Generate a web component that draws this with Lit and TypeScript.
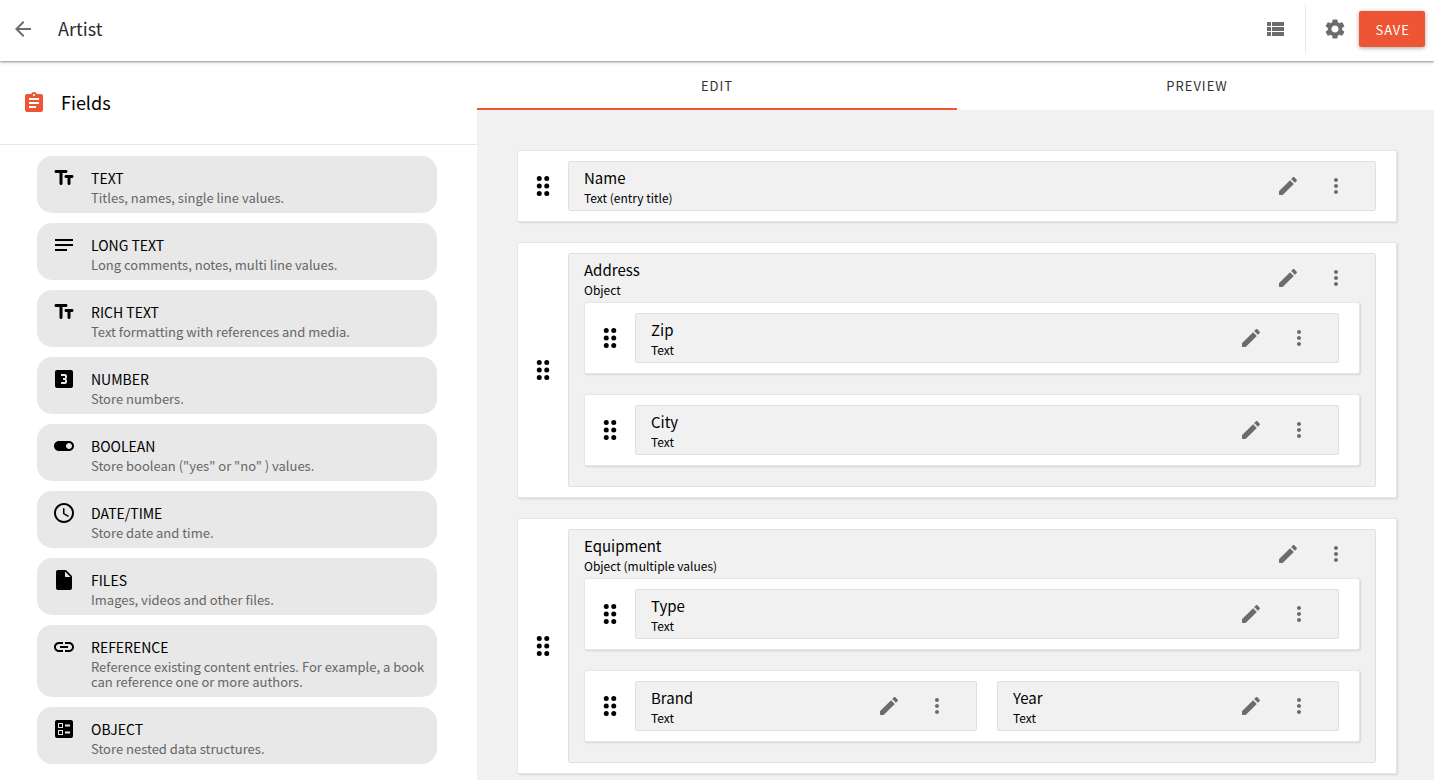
import { LitElement, html, css, svg } from "lit";
import { customElement, state } from "lit/decorators.js";
import { classMap } from "lit/directives/class-map.js";

interface FieldType {
  icon: string;
  label: string;
  description: string;
}

interface Field {
  label: string;
  type: string;
  rows?: Field[][];
}

const ICONS: Record<string, string> = {
  back: "M20 11H7.83l5.59-5.59L12 4l-8 8 8 8 1.41-1.41L7.83 13H20v-2z",
  list: "M4 14h4v-4H4v4zm0 5h4v-4H4v4zM4 9h4V5H4v4zm5 5h12v-4H9v4zm0 5h12v-4H9v4zM9 5v4h12V5H9z",
  settings:
    "M19.14 12.94c.04-.3.06-.61.06-.94 0-.32-.02-.64-.07-.94l2.03-1.58c.18-.14.23-.41.12-.61l-1.92-3.32c-.12-.22-.37-.29-.59-.22l-2.39.96c-.5-.38-1.03-.7-1.62-.94l-.36-2.54c-.04-.24-.24-.41-.48-.41h-3.84c-.24 0-.43.17-.47.41l-.36 2.54c-.59.24-1.13.57-1.62.94l-2.39-.96c-.22-.08-.47 0-.59.22L2.74 8.87c-.12.21-.08.47.12.61l2.03 1.58c-.05.3-.09.63-.09.94s.02.64.07.94l-2.03 1.58c-.18.14-.23.41-.12.61l1.92 3.32c.12.22.37.29.59.22l2.39-.96c.5.38 1.03.7 1.62.94l.36 2.54c.05.24.24.41.48.41h3.84c.24 0 .44-.17.47-.41l.36-2.54c.59-.24 1.13-.56 1.62-.94l2.39.96c.22.08.47 0 .59-.22l1.92-3.32c.12-.22.07-.47-.12-.61l-2.01-1.58zM12 15.6c-1.98 0-3.6-1.62-3.6-3.6s1.62-3.6 3.6-3.6 3.6 1.62 3.6 3.6-1.62 3.6-3.6 3.6z",
  assignment:
    "M19 3h-4.18C14.4 1.84 13.3 1 12 1c-1.3 0-2.4.84-2.82 2H5c-1.1 0-2 .9-2 2v14c0 1.1.9 2 2 2h14c1.1 0 2-.9 2-2V5c0-1.1-.9-2-2-2zm-7 0c.55 0 1 .45 1 1s-.45 1-1 1-1-.45-1-1 .45-1 1-1zm2 14H7v-2h7v2zm3-4H7v-2h10v2zm0-4H7V7h10v2z",
  edit: "M3 17.46v3.04c0 .28.22.5.5.5h3.04c.13 0 .26-.05.35-.15L17.81 9.94l-3.75-3.75L3.15 17.1c-.1.1-.15.22-.15.36zM20.71 7.04c.39-.39.39-1.02 0-1.41l-2.34-2.34c-.39-.39-1.02-.39-1.41 0l-1.83 1.83 3.75 3.75 1.83-1.83z",
  more: "M12 8c1.1 0 2-.9 2-2s-.9-2-2-2-2 .9-2 2 .9 2 2 2zm0 2c-1.1 0-2 .9-2 2s.9 2 2 2 2-.9 2-2-.9-2-2-2zm0 6c-1.1 0-2 .9-2 2s.9 2 2 2 2-.9 2-2-.9-2-2-2z",
  drag: "M8.25 2a2.5 2.5 0 1 0 0 5a2.5 2.5 0 1 0 0-5zM15.75 2a2.5 2.5 0 1 0 0 5a2.5 2.5 0 1 0 0-5zM8.25 9.5a2.5 2.5 0 1 0 0 5a2.5 2.5 0 1 0 0-5zM15.75 9.5a2.5 2.5 0 1 0 0 5a2.5 2.5 0 1 0 0-5zM8.25 17a2.5 2.5 0 1 0 0 5a2.5 2.5 0 1 0 0-5zM15.75 17a2.5 2.5 0 1 0 0 5a2.5 2.5 0 1 0 0-5z",
  text: "M2.5 5.5C2.5 6.33 3.17 7 4 7h3.5v10.5c0 .83.67 1.5 1.5 1.5s1.5-.67 1.5-1.5V7H14c.83 0 1.5-.67 1.5-1.5S14.83 4 14 4H4c-.83 0-1.5.67-1.5 1.5zM20 9h-6c-.83 0-1.5.67-1.5 1.5S13.17 12 14 12h1.5v5.5c0 .83.67 1.5 1.5 1.5s1.5-.67 1.5-1.5V12H20c.83 0 1.5-.67 1.5-1.5S20.83 9 20 9z",
  notes: "M3 6h18v2H3zM3 11h18v2H3zM3 16h12v2H3z",
  number:
    "M19.01 3h-14c-1.1 0-2 .9-2 2v14c0 1.1.9 2 2 2h14c1.1 0 2-.9 2-2V5c0-1.1-.9-2-2-2zm-4 7.5c0 .83-.67 1.5-1.5 1.5.83 0 1.5.67 1.5 1.5V15c0 1.11-.9 2-2 2h-4v-2h4v-2h-2v-2h2V9h-4V7h4c1.1 0 2 .89 2 2v1.5z",
  toggle:
    "M17 7H7c-2.76 0-5 2.24-5 5s2.24 5 5 5h10c2.76 0 5-2.24 5-5s-2.24-5-5-5zm0 8c-1.66 0-3-1.34-3-3s1.34-3 3-3 3 1.34 3 3-1.34 3-3 3z",
  clock:
    "M11.99 2C6.47 2 2 6.48 2 12s4.47 10 9.99 10C17.52 22 22 17.52 22 12S17.52 2 11.99 2zM12 20c-4.42 0-8-3.58-8-8s3.58-8 8-8 8 3.58 8 8-3.58 8-8 8zm-.22-13h-.06c-.4 0-.72.32-.72.72v4.72c0 .35.18.68.49.86l4.15 2.49c.34.2.78.1.98-.24.21-.34.1-.79-.25-.99l-3.87-2.3V7.72c0-.4-.32-.72-.72-.72z",
  file: "M6 2c-1.1 0-1.99.9-1.99 2L4 20c0 1.1.89 2 1.99 2H18c1.1 0 2-.9 2-2V8.83c0-.53-.21-1.04-.59-1.41l-4.83-4.83c-.37-.38-.88-.59-1.41-.59H6zm7 6V3.5L18.5 9H14c-.55 0-1-.45-1-1z",
  link: "M3.9 12c0-1.71 1.39-3.1 3.1-3.1h4V7H7c-2.76 0-5 2.24-5 5s2.24 5 5 5h4v-1.9H7c-1.71 0-3.1-1.39-3.1-3.1zM8 13h8v-2H8v2zm9-6h-4v1.9h4c1.71 0 3.1 1.39 3.1 3.1s-1.39 3.1-3.1 3.1h-4V17h4c2.76 0 5-2.24 5-5s-2.24-5-5-5z",
  ballot:
    "M13 9.5h5v-2h-5v2zm0 7h5v-2h-5v2zm6 4.5H5c-1.1 0-2-.9-2-2V5c0-1.1.9-2 2-2h14c1.1 0 2 .9 2 2v14c0 1.1-.9 2-2 2zM6 11h5V6H6v5zm1-4h3v3H7V7zM6 18h5v-5H6v5zm1-4h3v3H7v-3z",
};

const icon = (name: string) => html`
  <svg class="icon" viewBox="0 0 24 24" width="24" height="24" aria-hidden="true">
    ${svg`<path fill="currentColor" fill-rule="evenodd" d=${ICONS[name]}></path>`}
  </svg>
`;

const FIELD_TYPES: FieldType[] = [
  { icon: "text", label: "TEXT", description: "Titles, names, single line values." },
  { icon: "notes", label: "LONG TEXT", description: "Long comments, notes, multi line values." },
  { icon: "text", label: "RICH TEXT", description: "Text formatting with references and media." },
  { icon: "number", label: "NUMBER", description: "Store numbers." },
  { icon: "toggle", label: "BOOLEAN", description: 'Store boolean ("yes" or "no" ) values.' },
  { icon: "clock", label: "DATE/TIME", description: "Store date and time." },
  { icon: "file", label: "FILES", description: "Images, videos and other files." },
  {
    icon: "link",
    label: "REFERENCE",
    description:
      "Reference existing content entries. For example, a book can reference one or more authors.",
  },
  { icon: "ballot", label: "OBJECT", description: "Store nested data structures." },
];

const ROWS: Field[][] = [
  [{ label: "Name", type: "Text (entry title)" }],
  [
    {
      label: "Address",
      type: "Object",
      rows: [[{ label: "Zip", type: "Text" }], [{ label: "City", type: "Text" }]],
    },
  ],
  [
    {
      label: "Equipment",
      type: "Object (multiple values)",
      rows: [
        [{ label: "Type", type: "Text" }],
        [
          { label: "Brand", type: "Text" },
          { label: "Year", type: "Text" },
        ],
      ],
    },
  ],
];

@customElement("app-root")
export class AppRoot extends LitElement {
  @state() private tab = "Edit";

  static styles = css`
    :host {
      display: flex;
      flex-direction: column;
      height: 100vh;
      overflow: hidden;
      background: #fff;
      color: #000;
      font-family: "Noto Sans CJK SC", "Noto Sans", sans-serif;
    }
    *,
    *::before,
    *::after {
      box-sizing: border-box;
    }
    h1,
    h2,
    h3,
    p,
    ul {
      margin: 0;
      padding: 0;
      font-weight: 400;
    }
    button {
      border: 0;
      padding: 0;
      background: none;
      font: inherit;
      color: inherit;
      cursor: pointer;
    }
    .icon {
      display: block;
      flex: none;
    }
    .icon-button {
      display: grid;
      place-items: center;
      width: 48px;
      height: 48px;
      color: #6c6c6c;
    }

    .topbar {
      position: relative;
      z-index: 1;
      display: flex;
      align-items: center;
      flex: none;
      height: 61px;
      padding: 0 9px 3px 0;
      background: #fff;
      box-shadow: 0 1px 2px rgba(0, 0, 0, 0.4), 0 2px 6px rgba(0, 0, 0, 0.08);
    }
    .back {
      width: 46px;
    }
    .title {
      flex: 1;
      padding: 0 0 2px 12px;
      font-size: 18px;
      line-height: 24px;
      color: #2c2c2c;
    }
    .actions {
      display: flex;
      align-items: center;
    }
    .settings {
      margin-left: 6px;
      border-left: 1px solid #e6e6e6;
      width: 54px;
      padding-left: 4px;
    }
    .save {
      height: 36px;
      padding: 0 15px 0 16px;
      border-radius: 2px;
      background: #ee5535;
      color: #fff;
      font-size: 13px;
      letter-spacing: 1px;
      box-shadow: 0 1px 4px rgba(0, 0, 0, 0.35);
    }

    .workspace {
      display: grid;
      grid-template-columns: minmax(0, 477fr) minmax(0, 960fr);
      flex: 1;
      min-height: 0;
      margin-right: -3px;
    }

    .sidebar-head {
      display: flex;
      align-items: center;
      gap: 15px;
      height: 84px;
      padding-left: 22px;
      border-bottom: 1px solid #e6e6e6;
    }
    .sidebar-head .icon {
      color: #ee5535;
    }
    .sidebar-title {
      padding-bottom: 2px;
      font-size: 18px;
      line-height: 24px;
    }
    .types {
      display: flex;
      flex-direction: column;
      gap: 10px;
      padding: 11px 40px 11px 37px;
      list-style: none;
    }
    .type {
      display: flex;
      gap: 15px;
      padding: 10px 10px 8px 15px;
      border-radius: 15px;
      background: #e8e8e8;
      cursor: grab;
    }
    .type-label {
      font-size: 14px;
      line-height: 24px;
    }
    .type-text {
      font-size: 13px;
      line-height: 15px;
      color: #666;
    }

    .main {
      display: flex;
      flex-direction: column;
      min-height: 0;
      background: #f1f1f1;
    }
    .tabs {
      display: flex;
      flex: none;
      background: #fff;
    }
    .tab {
      flex: 1;
      height: 49px;
      padding-top: 2px;
      border-bottom: 2px solid transparent;
      font-size: 13px;
      letter-spacing: 1px;
      color: #333;
      text-transform: uppercase;
    }
    .tab.active {
      border-bottom-color: #ee5535;
    }
    .canvas {
      flex: 1;
      min-height: 0;
      overflow: hidden;
      padding: 40px 40px 0;
    }

    .row {
      display: flex;
      margin-bottom: 20px;
      padding: 10px 20px 10px 0;
      border: 1px solid #e6e6e6;
      border-radius: 2px;
      background: #fff;
      box-shadow: 1px 1px 2px rgba(0, 0, 0, 0.12);
    }
    .handle {
      display: grid;
      place-items: center;
      flex: none;
      width: 50px;
      cursor: grab;
    }
    .cells {
      display: flex;
      flex: 1;
      gap: 20px;
      min-width: 0;
    }
    .field {
      flex: 1;
      min-width: 0;
      padding: 0 15px;
      border: 1px solid #e0e0e0;
      border-radius: 2px;
      background: #f1f1f1;
    }
    .field-head {
      display: flex;
      align-items: center;
      height: 48px;
    }
    .field-info {
      flex: 1;
      padding-top: 3px;
    }
    .field-label {
      font-size: 15px;
      line-height: 20px;
    }
    .field-type {
      font-size: 12px;
      line-height: 20px;
    }
  `;

  private renderRow(fields: Field[]): unknown {
    return html`
      <div class="row">
        <div class="handle">${icon("drag")}</div>
        <div class="cells">${fields.map((f) => this.renderField(f))}</div>
      </div>
    `;
  }

  private renderField(field: Field): unknown {
    return html`
      <section class="field">
        <div class="field-head">
          <div class="field-info">
            <h3 class="field-label">${field.label}</h3>
            <p class="field-type">${field.type}</p>
          </div>
          <button class="icon-button" aria-label="Edit ${field.label}">${icon("edit")}</button>
          <button class="icon-button" aria-label="More for ${field.label}">${icon("more")}</button>
        </div>
        ${field.rows?.map((r) => this.renderRow(r))}
      </section>
    `;
  }

  render() {
    return html`
      <header class="topbar">
        <button class="icon-button back" aria-label="Back">${icon("back")}</button>
        <h1 class="title">Artist</h1>
        <div class="actions">
          <button class="icon-button" aria-label="List">${icon("list")}</button>
          <button class="icon-button settings" aria-label="Settings">${icon("settings")}</button>
          <button class="save">SAVE</button>
        </div>
      </header>
      <div class="workspace">
        <aside>
          <div class="sidebar-head">
            ${icon("assignment")}
            <h2 class="sidebar-title">Fields</h2>
          </div>
          <ul class="types">
            ${FIELD_TYPES.map(
              (t) => html`
                <li class="type" draggable="true">
                  ${icon(t.icon)}
                  <div>
                    <h3 class="type-label">${t.label}</h3>
                    <p class="type-text">${t.description}</p>
                  </div>
                </li>
              `
            )}
          </ul>
        </aside>
        <main class="main">
          <div class="tabs" role="tablist">
            ${["Edit", "Preview"].map(
              (name) => html`
                <button
                  role="tab"
                  class=${classMap({ tab: true, active: this.tab === name })}
                  aria-selected=${this.tab === name ? "true" : "false"}
                  @click=${() => (this.tab = name)}
                >
                  ${name}
                </button>
              `
            )}
          </div>
          <div class="canvas">${ROWS.map((r) => this.renderRow(r))}</div>
        </main>
      </div>
    `;
  }
}
